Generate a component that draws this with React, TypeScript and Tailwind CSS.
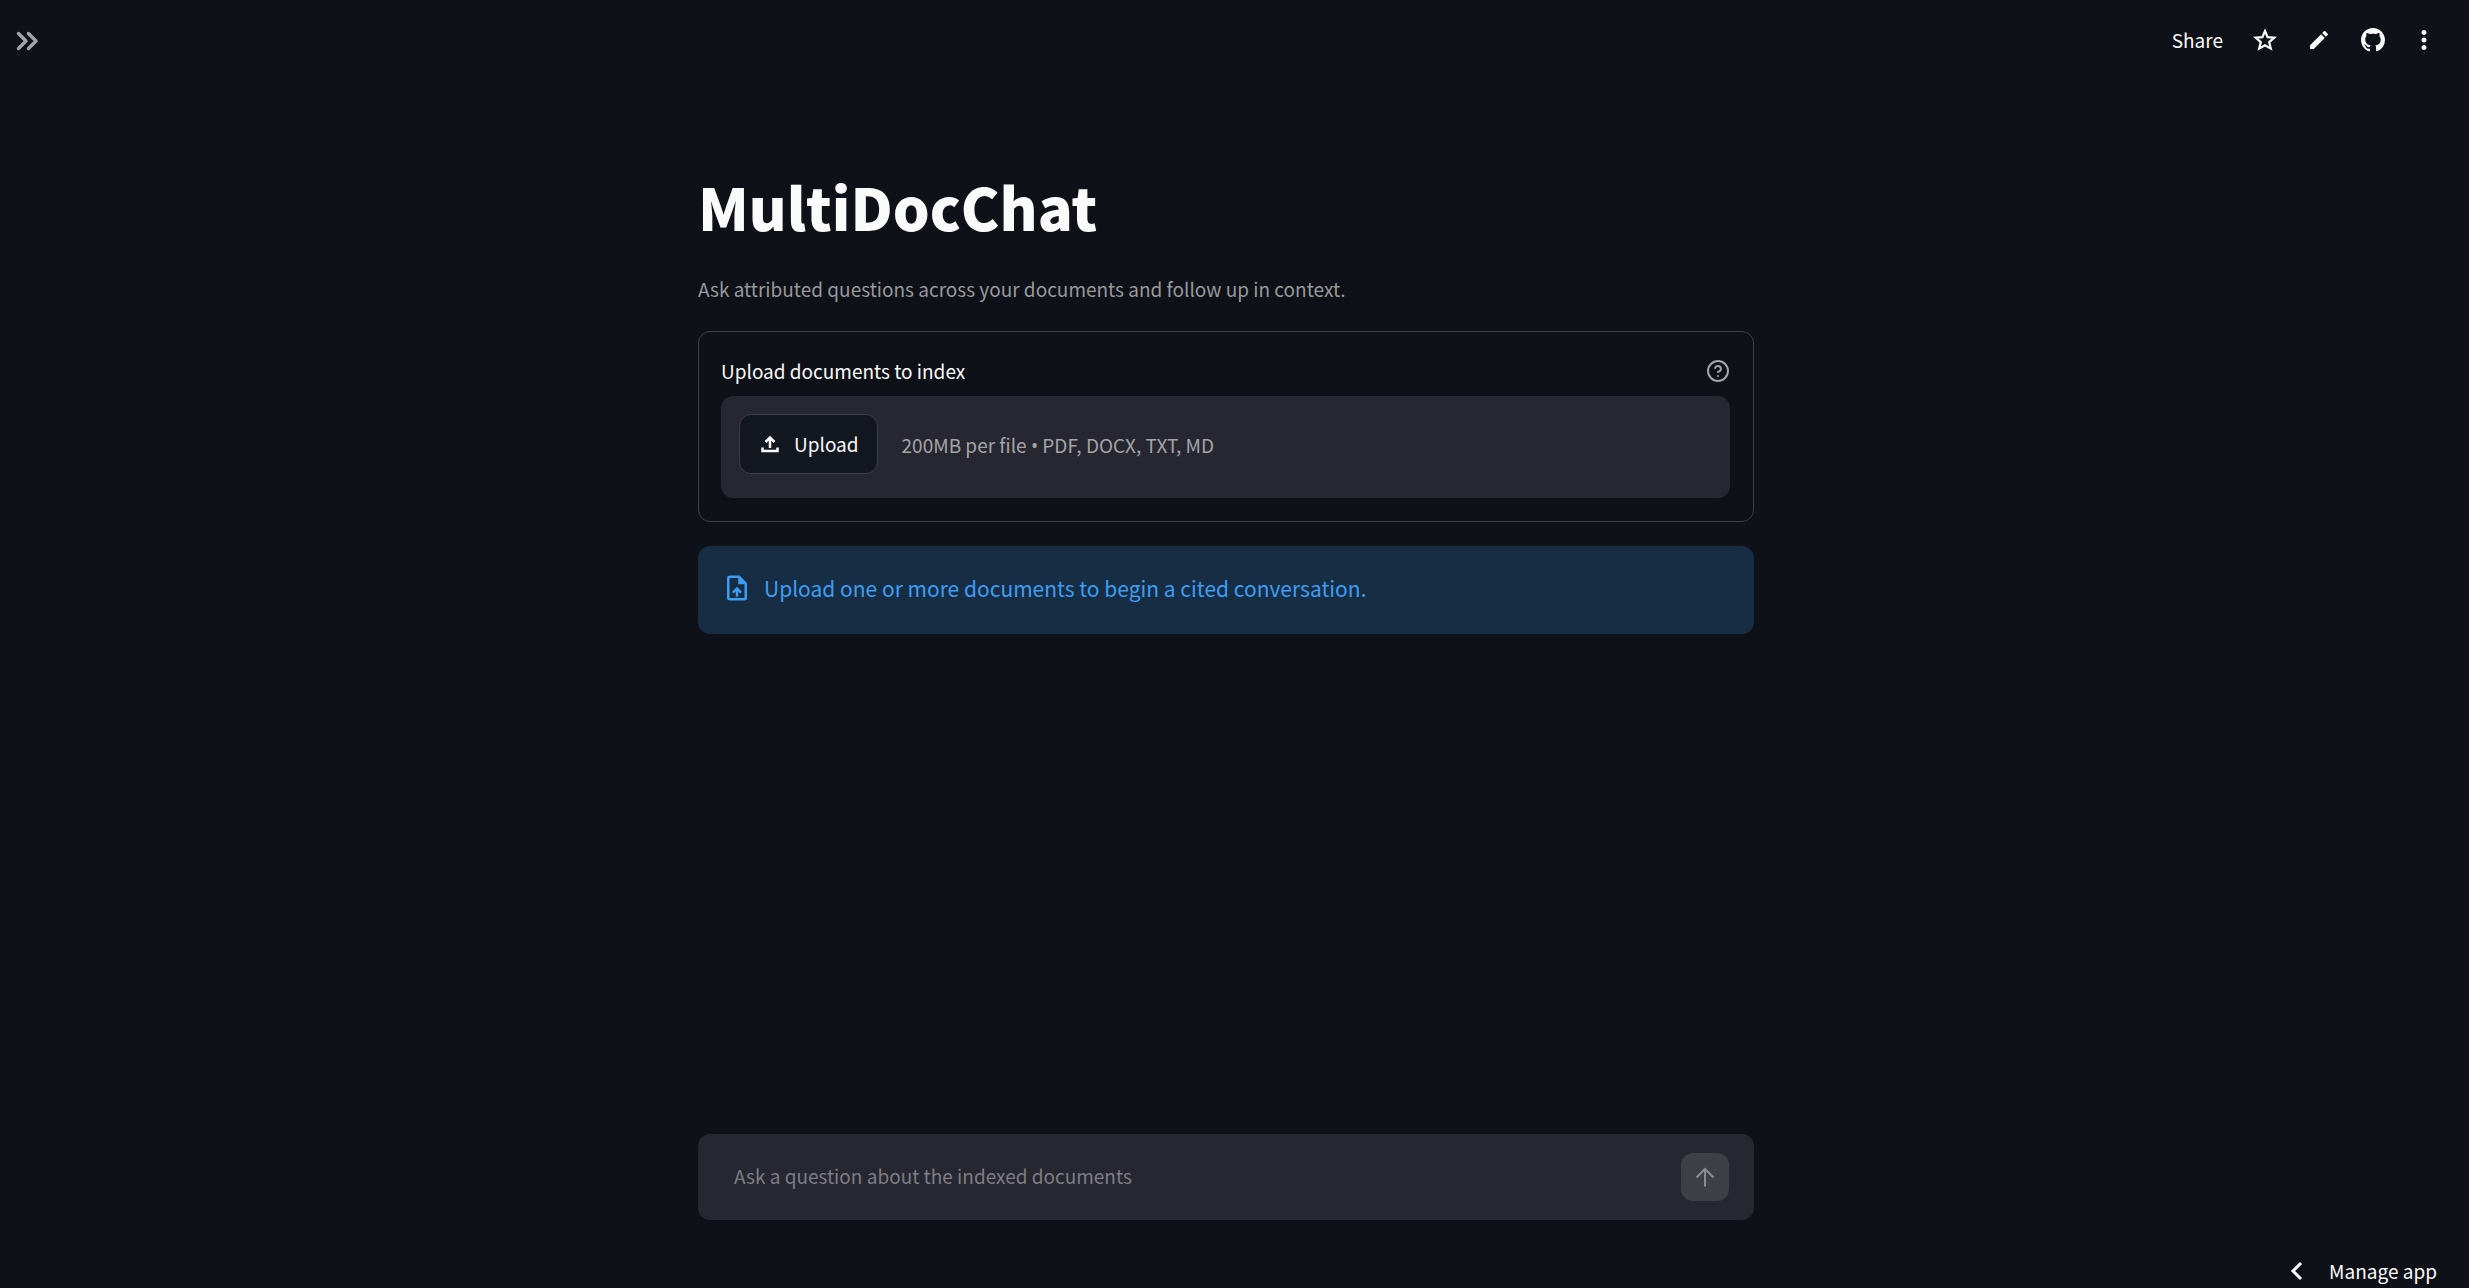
import React, { useState } from "react";
import { MdEdit, MdMoreVert, MdOutlineUploadFile } from "react-icons/md";
import { VscGithubInverted } from "react-icons/vsc";

const DoubleChevron: React.FC = () => (
    <svg
        className="h-6 w-6"
        viewBox="0 0 24 24"
        fill="none"
        stroke="currentColor"
        strokeWidth="3.4"
        strokeLinecap="round"
        strokeLinejoin="round">
        <path d="M3.5 4.5 11 12l-7.5 7.5M13.5 4.5 21 12l-7.5 7.5" />
    </svg>
);

const StarIcon: React.FC = () => (
    <svg
        className="h-6 w-6"
        viewBox="0 0 24 24"
        fill="none"
        stroke="currentColor"
        strokeWidth="2.2"
        strokeLinejoin="miter">
        <path d="M12 3l2.6 6.1 6.7.6-5.1 4.4 1.6 6.5L12 17.2l-5.8 3.4 1.6-6.5-5.1-4.4 6.7-.6z" />
    </svg>
);

const UploadIcon: React.FC = () => (
    <svg
        className="h-6 w-6"
        viewBox="0 0 24 24"
        fill="none"
        stroke="currentColor"
        strokeWidth="2.5">
        <path d="M12 16V6M7.5 10 12 5.5l4.5 4.5M4.5 15.5V19h15v-3.5" />
    </svg>
);

const HelpIcon: React.FC = () => (
    <svg
        className="h-6 w-6"
        viewBox="0 0 24 24"
        fill="none"
        stroke="currentColor"
        strokeWidth="2"
        strokeLinecap="round"
        strokeLinejoin="round">
        <circle cx="12" cy="12" r="10" />
        <path d="M9.09 9a3 3 0 0 1 5.83 1c0 2-3 3-3 3" />
        <path d="M12 17h.01" />
    </svg>
);

const ArrowUp: React.FC = () => (
    <svg
        className="h-6 w-6"
        viewBox="0 0 24 24"
        fill="none"
        stroke="currentColor"
        strokeWidth="2">
        <path d="M12 21.5V4M3.5 12.5 12 4l8.5 8.5" />
    </svg>
);

const Header: React.FC = () => (
    <header className="flex h-20 items-center justify-between pr-[30px] pl-[15px]">
        <button aria-label="Open sidebar" className="pt-0.5 text-[#a3a4a8]">
            <DoubleChevron />
        </button>
        <div className="flex items-center gap-6">
            <div className="flex items-center gap-[30px]">
                <button className="text-[19px] leading-6">Share</button>
                <button aria-label="Star">
                    <StarIcon />
                </button>
                <button aria-label="Edit">
                    <MdEdit className="h-6 w-6" />
                </button>
                <button aria-label="View source">
                    <VscGithubInverted className="h-6 w-6" />
                </button>
            </div>
            <button aria-label="More options">
                <MdMoreVert className="h-[30px] w-[30px]" />
            </button>
        </div>
    </header>
);

const Uploader: React.FC = () => (
    <section className="mt-[26px] rounded-xl border border-[#3d4047] pt-[22px] pr-[23px] pb-[23px] pl-[22px]">
        <div className="flex h-[34px] items-center justify-between">
            <h2 className="text-[19px] leading-8">Upload documents to index</h2>
            <button aria-label="Help" className="text-[#a3a4a8]">
                <HelpIcon />
            </button>
        </div>
        <div className="mt-2 flex h-[102px] items-start gap-6 rounded-xl bg-[#262730] p-[18px]">
            <button className="flex h-[60px] items-center gap-3 rounded-xl border border-[#3d4047] bg-[#131720] px-[18px] text-[19px]">
                <UploadIcon />
                Upload
            </button>
            <p className="text-[19px] leading-[62px] text-[#a3a4a8]">
                200MB per file{" "}
                <span className="font-['Noto_Sans',sans-serif]">•</span> PDF,
                DOCX, TXT, MD
            </p>
        </div>
    </section>
);

const App: React.FC = () => {
    const [question, setQuestion] = useState("");

    return (
        <div className="flex min-h-screen flex-col bg-[#0e1117] font-['Noto_Sans_CJK_SC','Noto_Sans',sans-serif] text-[#fafafa]">
            <Header />

            <main className="flex grow flex-col pr-[17px]">
                <div className="mx-auto flex w-full max-w-[1056px] grow flex-col">
                    <h1 className="mt-[86px] text-[58px] leading-[80px] font-black">
                        MultiDocChat
                    </h1>
                    <p className="mt-[27px] text-[19px] leading-8 text-[#98999c]">
                        Ask attributed questions across your documents and
                        follow up in context.
                    </p>

                    <Uploader />

                    <div
                        role="status"
                        className="mt-6 flex h-[88px] items-start gap-3 rounded-xl bg-[#172d43] px-6 pt-6 text-[#3d9df3]">
                        <MdOutlineUploadFile className="mt-[3px] h-[30px] w-[30px]" />
                        <p className="text-[21px] leading-9">
                            Upload one or more documents to begin a cited
                            conversation.
                        </p>
                    </div>

                    <form
                        className="mt-auto flex h-[86px] items-center rounded-xl bg-[#262730] pr-[25px] pl-9"
                        onSubmit={(e) => e.preventDefault()}>
                        <input
                            type="text"
                            aria-label="Question"
                            value={question}
                            onChange={(e) => setQuestion(e.target.value)}
                            placeholder="Ask a question about the indexed documents"
                            className="grow pb-0.5 text-[19px] leading-9 outline-none placeholder:text-[#7d7e84]"
                        />
                        <button
                            type="submit"
                            aria-label="Send"
                            className="flex h-12 w-12 items-center justify-center rounded-xl bg-[#3d4047] text-[#8b8c90]">
                            <ArrowUp />
                        </button>
                    </form>
                </div>
            </main>

            <footer className="flex h-[68px] items-end justify-end pr-8 pb-px">
                <button className="flex items-center gap-5 text-[19px] leading-8">
                    <svg
                        className="h-6 w-6"
                        viewBox="0 0 24 24"
                        fill="none"
                        stroke="currentColor"
                        strokeWidth="3">
                        <path d="M16 4 8 12l8 8" />
                    </svg>
                    Manage app
                </button>
            </footer>
        </div>
    );
};

export default App;
